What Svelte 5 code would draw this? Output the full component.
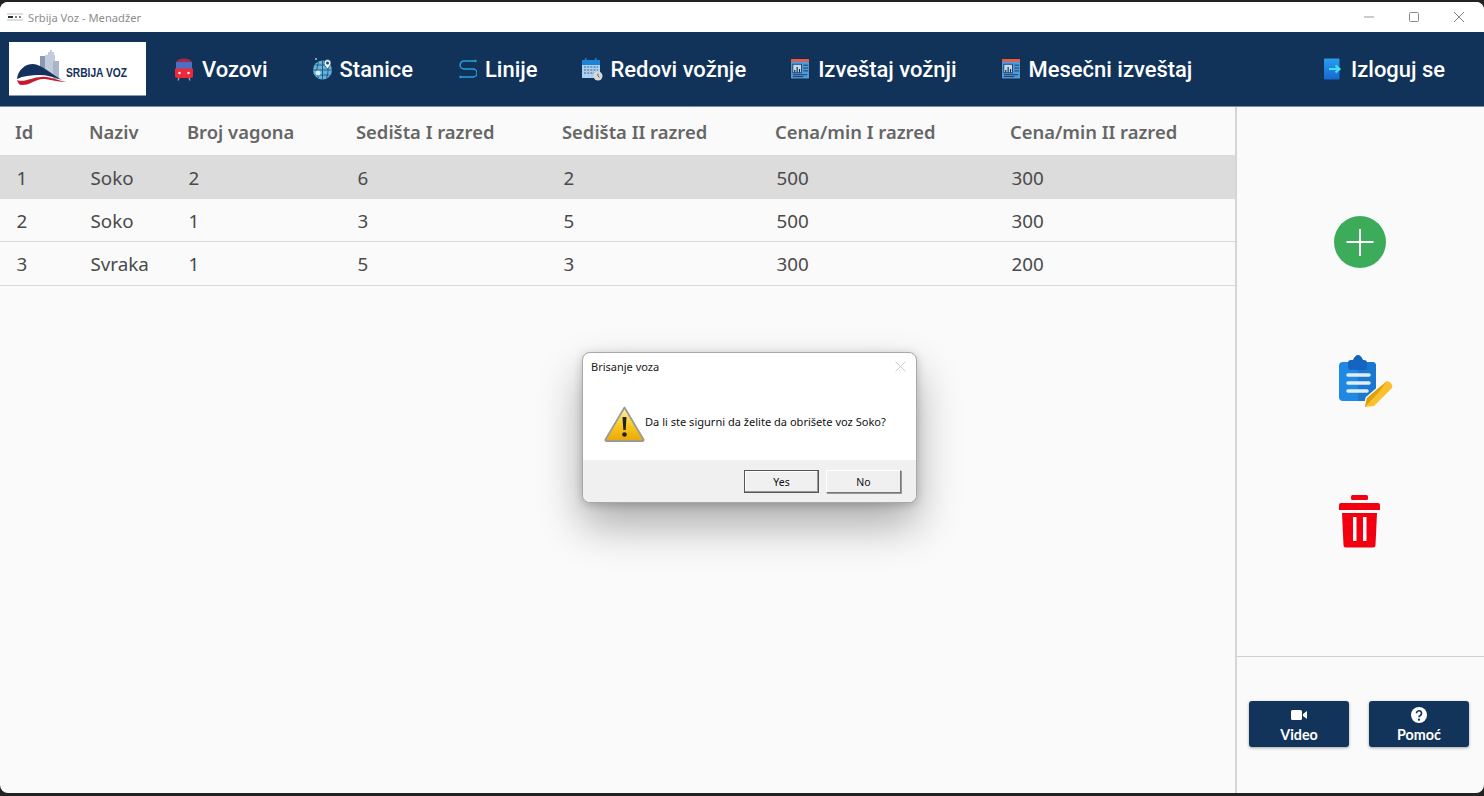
<script lang="ts">
  const columns = ["Id", "Naziv", "Broj vagona", "Sedišta I razred", "Sedišta II razred", "Cena/min I razred", "Cena/min II razred"];
  const trains = [
    [1, "Soko", 2, 6, 2, 500, 300],
    [2, "Soko", 1, 3, 5, 500, 300],
    [3, "Svraka", 1, 5, 3, 300, 200],
  ];
</script>

{#snippet train()}
  <svg width="20" height="24" viewBox="0 0 20 24">
    <path d="M2 7c0-4 4-5.500 8-5.500S18 3 18 7v2H2z" fill="#a62a45" />
    <rect x="2" y="5" width="16" height="7" fill="#4a6fc4" />
    <path d="M1 11.500h18V19a2 2 0 0 1-2 2H3a2 2 0 0 1-2-2z" fill="#ee2a3a" />
    <circle cx="5.500" cy="16" r="1.200" fill="#fff" />
    <circle cx="14.500" cy="16" r="1.200" fill="#fff" />
    <path d="M5 21l-1 2.500M15 21l1 2.500" stroke="#aab" stroke-width="1.200" />
  </svg>
{/snippet}

{#snippet globe()}
  <svg width="20" height="24" viewBox="-1 0 20 24">
    <circle cx="9.500" cy="13" r="9.500" fill="#63b4dc" />
    <path d="M0 13h19M9.500 3.500v19M2.500 8h14M2.500 18h14M5.500 5c-2 5-2 11 0 16M13.500 5c2 5 2 11 0 16" stroke="#17496f" stroke-width=".8" fill="none" />
    <circle cx="5" cy="16" r="2.500" fill="#d8ecf6" />
    <path d="M14.500 12c-2.500-3-3.500-4.500-3.500-6a3.500 3.500 0 0 1 7 0c0 1.500-1 3-3.500 6z" fill="#eef6fa" stroke="#17496f" stroke-width=".7" />
    <circle cx="14.500" cy="6" r="1.500" fill="#17496f" />
    <circle cx="3" cy="2" r="1" fill="#9cc" />
  </svg>
{/snippet}

{#snippet line()}
  <svg width="20" height="24" viewBox="-1.500 0 20 24" fill="none">
    <path d="M17 4H5.500a4 4 0 0 0 0 8h9a4 4 0 0 1 0 8H2" stroke="#2a9fdc" stroke-width="1.400" />
    <circle cx="17" cy="4" r="1.200" fill="#2a9fdc" />
    <circle cx="2" cy="20" r="1.200" fill="#2a9fdc" />
  </svg>
{/snippet}

{#snippet calendar()}
  <svg width="21" height="24" viewBox="0 0 21 24">
    <rect x="0" y="3" width="18" height="18" fill="#a9d2f2" />
    <rect x="0" y="3" width="18" height="5" fill="#1d83d8" />
    <rect x="3" y="1" width="1.500" height="4" fill="#1d83d8" />
    <rect x="13" y="1" width="1.500" height="4" fill="#1d83d8" />
    <path d="M2 10h14M2 13h14M2 16h10" stroke="#6f7fa8" stroke-width="1.400" stroke-dasharray="2 1.200" />
    <circle cx="16" cy="19" r="4.500" fill="#d8d8d8" />
    <path d="M16 16.500V19l1.500 1.500" stroke="#555" stroke-width=".9" fill="none" />
  </svg>
{/snippet}

{#snippet report()}
  <svg width="20" height="24" viewBox="0 0 21 24">
    <rect x=".5" y="1" width="20" height="21.500" fill="#4d9ade" stroke="#1d2840" />
    <rect x="1" y="1.500" width="19" height="3" fill="#e0604c" />
    <rect x="3" y="7" width="9" height="9" fill="#bcdcf4" stroke="#1d2840" stroke-width=".8" />
    <path d="M5 16v-3M7.500 16v-6M10 16v-4" stroke="#1d2840" stroke-width="1.200" />
    <path d="M14 8h5M14 11h5M14 14h5M3 18h15M3 20h11" stroke="#16304f" stroke-width=".9" />
  </svg>
{/snippet}

{#snippet logout()}
  <svg width="20" height="24" viewBox="0 0 20 24">
    <defs>
      <linearGradient id="door" x1="0" y1="0" x2="0" y2="1">
        <stop offset="0" stop-color="#2a9cf0" />
        <stop offset="1" stop-color="#1668d0" />
      </linearGradient>
    </defs>
    <rect x="1" y="1.500" width="15.500" height="21" rx="1" fill="url(#door)" />
    <path d="M6 12h10M12.500 8.500l4 3.500-4 3.500" stroke="#3fe0f0" stroke-width="2.200" fill="none" />
  </svg>
{/snippet}

<div class="screen">
  <div class="window">
    <header class="titlebar">
      <div class="title">
        <svg class="app-icon" width="16" height="8" viewBox="0 0 16 8">
          <path d="M0 1h16M0 7h16" stroke="#bbb" stroke-width="1" />
          <path d="M1 4h5" stroke="#233" stroke-width="2" />
          <path d="M8 4h2M12 4h2" stroke="#555" stroke-width="1.500" />
        </svg>
        <span>Srbija Voz - Menadžer</span>
      </div>
      <div class="window-controls">
        <svg width="12" height="12" viewBox="0 0 12 12"><path d="M1 6h10" stroke="#999" /></svg>
        <svg width="12" height="12" viewBox="0 0 12 12"><rect x="1.500" y="1.500" width="9" height="9" rx="1" fill="none" stroke="#888" /></svg>
        <svg width="12" height="12" viewBox="0 0 12 12"><path d="M1 1l10 10M11 1L1 11" stroke="#888" /></svg>
      </div>
    </header>

    <nav class="navbar">
      <div class="logo">
        <svg width="137" height="54" viewBox="0 0 137 54">
          <rect x="31" y="14" width="6" height="18" fill="#8a99b5" />
          <path d="M36 33V13h3V10h2V8h2v2h2v3h1v20z" fill="#c2cbdb" />
          <rect x="44" y="19" width="6" height="18" fill="#a9b5ca" />
          <path d="M8 37C9 28 16 22 24 22c8 0 18 10 29 16-8-3-15-5-23-5-8 0-16 1-22 4z" fill="#13315c" />
          <path d="M8 38c1 3 2 5 5 5 9 0 14-7 23-6 8 1 14 3 22 3-10-1-16-6-26-5-8 0-17 6-24 3z" fill="#c8192e" />
          <text x="57" y="35" class="logo-text" textLength="61" lengthAdjust="spacingAndGlyphs">SRBIJA VOZ</text>
        </svg>
      </div>
      <a class="nav-item">{@render train()}<span>Vozovi</span></a>
      <a class="nav-item">{@render globe()}<span>Stanice</span></a>
      <a class="nav-item">{@render line()}<span>Linije</span></a>
      <a class="nav-item">{@render calendar()}<span>Redovi vožnje</span></a>
      <a class="nav-item">{@render report()}<span>Izveštaj vožnji</span></a>
      <a class="nav-item">{@render report()}<span>Mesečni izveštaj</span></a>
      <a class="nav-item logout">{@render logout()}<span>Izloguj se</span></a>
    </nav>

    <div class="content">
      <main class="table">
        <div class="row head">
          {#each columns as col}
            <div>{col}</div>
          {/each}
        </div>
        {#each trains as t, i}
          <div class="row body" class:selected={i === 0} class:plain={i === 0}>
            {#each t as cell}
              <div>{cell}</div>
            {/each}
          </div>
        {/each}
      </main>

      <aside class="sidebar">
        <div class="actions">
          <button class="action" aria-label="Dodaj">
            <svg width="52" height="52" viewBox="0 0 52 52">
              <circle cx="26" cy="26" r="26" fill="#3cab5a" />
              <path d="M26 13v27M12.500 26h27" stroke="#fff" stroke-width="2" />
            </svg>
          </button>
          <button class="action" aria-label="Izmeni">
            <svg width="54" height="54" viewBox="0 0 54 54">
              <path d="M4 7h29a4 4 0 0 1 4 4v31a4 4 0 0 1-4 4H4a4 4 0 0 1-4-4V11a4 4 0 0 1 4-4z" fill="#1e88e5" />
              <path d="M19 7h14a4 4 0 0 1 4 4v31a4 4 0 0 1-4 4H19z" fill="#1b78d0" />
              <path d="M9 8a3 3 0 0 1 3-3h2c1-3 3-5 5-5s4 2 5 5h1a3 3 0 0 1 3 3v4a3 3 0 0 1-3 3H12a3 3 0 0 1-3-3z" fill="#1565c0" />
              <path d="M9 20h21M9 28h21M9 36h19" stroke="#e3edf8" stroke-width="3.500" stroke-linecap="round" />
              <path d="M48 26 28 43l-2 9 9-1 18-18c1-3-1-6-5-7z" fill="#fbc02d" stroke="#fafafa" stroke-width="3" paint-order="stroke" />
              <path d="M48 26 28 43l-2 9 13-14z" fill="#dc9f0e" />
            </svg>
          </button>
          <button class="action" aria-label="Obriši">
            <svg width="42" height="53" viewBox="0 0 42 53">
              <rect x="12" y="0" width="17" height="5" rx="1.500" fill="#f2000f" />
              <path d="M0 10a2 2 0 0 1 2-2h37a2 2 0 0 1 2 2v5H0z" fill="#f2000f" />
              <path d="M3 18h35l-1.500 32a2.500 2.500 0 0 1-2.500 2.500H7A2.500 2.500 0 0 1 4.500 50z" fill="#f2000f" />
              <rect x="14" y="22" width="3.500" height="24" fill="#fafafa" />
              <rect x="24" y="22" width="3.500" height="24" fill="#fafafa" />
            </svg>
          </button>
        </div>
        <div class="help">
          <button class="help-btn">
            <svg width="16" height="16" viewBox="0 0 16 16">
              <rect x="0" y="3" width="11" height="10" rx="1.500" fill="#fff" />
              <path d="M12 7l4-3v8l-4-3z" fill="#fff" />
            </svg>
            <span>Video</span>
          </button>
          <button class="help-btn">
            <svg width="16" height="16" viewBox="0 0 16 16">
              <circle cx="8" cy="8" r="8" fill="#fff" />
              <path d="M5.500 6.300a2.500 2.500 0 1 1 3.800 2.100c-.9.500-1.300 1-1.300 1.900" fill="none" stroke="#12335a" stroke-width="1.700" />
              <circle cx="8" cy="12.700" r="1.100" fill="#12335a" />
            </svg>
            <span>Pomoć</span>
          </button>
        </div>
      </aside>
    </div>

    <div class="dialog">
      <div class="dialog-body">
        <div class="dialog-title">
          <span>Brisanje voza</span>
          <svg width="11" height="11" viewBox="0 0 11 11"><path d="M.5.500l10 10M10.500.500l-10 10" stroke="#ccc" /></svg>
        </div>
        <div class="dialog-msg">
          <svg width="41" height="36" viewBox="0 0 41 36">
            <defs>
              <linearGradient id="warn" x1="0" y1="0" x2="0" y2="1">
                <stop offset="0" stop-color="#fff3b0" />
                <stop offset=".55" stop-color="#f7c81e" />
                <stop offset="1" stop-color="#eba708" />
              </linearGradient>
            </defs>
            <path d="M20.500 1.500 39.500 33.500a1 1 0 0 1-1 1.500H2.500a1 1 0 0 1-1-1.500z" fill="url(#warn)" stroke="#9a9a9a" stroke-width="1.800" stroke-linejoin="round" />
            <path d="M18.500 11h4l-.8 13h-2.400z" fill="#222" />
            <circle cx="20.500" cy="28.500" r="2.300" fill="#222" />
          </svg>
          <span>Da li ste sigurni da želite da obrišete voz Soko?</span>
        </div>
      </div>
      <div class="dialog-footer">
        <button class="win-btn default">Yes</button>
        <button class="win-btn">No</button>
      </div>
    </div>
  </div>
</div>

<style>
  :global(body) {
    margin: 0;
    background: #222;
    overflow: hidden;
  }

  .screen {
    height: 796px;
    padding: 2px 0 3px;
    box-sizing: border-box;
    background: #222;
  }

  .window {
    position: relative;
    height: 100%;
    display: flex;
    flex-direction: column;
    background: #fafafa;
    border-radius: 8px;
    overflow: hidden;
  }

  .titlebar {
    flex: 0 0 30px;
    display: flex;
    justify-content: space-between;
    align-items: center;
    background: #fff;
  }

  .title {
    display: flex;
    align-items: center;
    gap: 5px;
    padding-left: 7px;
    font: 11.200px "Noto Sans", sans-serif;
    color: #8d8d8d;
  }

  .window-controls {
    display: flex;
    gap: 33px;
    padding-right: 19px;
  }

  .navbar {
    flex: 0 0 75px;
    display: flex;
    align-items: center;
    gap: 44px;
    padding: 0 39px 0 9px;
    background: #11335a;
    border-bottom: 1px solid #7d8ea3;
    box-sizing: border-box;
  }

  .logo {
    width: 137px;
    height: 54px;
    margin-right: -16px;
    background: #fff;
    border-bottom: 1px solid #8a99b5;
    box-sizing: border-box;
  }

  .logo svg {
    display: block;
  }

  .logo-text {
    font: bold 12.500px "Liberation Sans", sans-serif;
    fill: #13315c;
  }

  .nav-item {
    display: flex;
    align-items: center;
    gap: 8px;
    color: #fff;
    font: 500 21.950px Roboto, sans-serif;
  }

  .nav-item svg {
    display: block;
  }

  .logout {
    margin-left: auto;
  }

  .content {
    flex: 1;
    display: flex;
    min-height: 0;
  }

  .table {
    flex: 1;
    font-family: "Noto Sans", sans-serif;
  }

  .row {
    display: grid;
    grid-template-columns: 74px 98px 169px 206px 213px 235px 1fr;
    padding-left: 15px;
    align-items: center;
    box-sizing: border-box;
  }

  .head {
    height: 48px;
    font-size: 18.400px;
    font-weight: 600;
    color: #666;
  }

  .body {
    height: 43.500px;
    padding-top: 2px;
    font-size: 18.800px;
    color: #4a4a4a;
    border-bottom: 1px solid #d8d8d8;
  }

  .body > div {
    padding-left: 1.500px;
  }

  .plain {
    border-bottom: none;
  }

  .selected {
    background: #dcdcdc;
  }

  .sidebar {
    flex: 0 0 249px;
    display: flex;
    flex-direction: column;
    border-left: 2px solid #d5d5d5;
    box-sizing: border-box;
  }

  .actions {
    flex: 1;
    display: flex;
    flex-direction: column;
    justify-content: center;
    align-items: center;
    gap: 80px;
    padding-right: 1px;
  }

  .action {
    height: 60px;
    padding: 0;
    display: flex;
    align-items: center;
    background: none;
    border: none;
  }

  .action:nth-child(2) {
    margin-left: 11px;
  }

  .help {
    flex: 0 0 137px;
    display: flex;
    gap: 20px;
    padding: 44px 0 0 12px;
    border-top: 1px solid #cfcfcf;
    box-sizing: border-box;
  }

  .help-btn {
    width: 100px;
    height: 46px;
    display: flex;
    flex-direction: column;
    align-items: center;
    justify-content: center;
    gap: 3px;
    padding: 2px 0 0;
    border: none;
    border-radius: 3px;
    background: #12335a;
    color: #fff;
    font: bold 14.300px Lato, sans-serif;
    box-shadow: 0 1px 3px rgba(0, 0, 0, 0.35);
  }

  .help-btn svg {
    display: block;
  }

  .dialog {
    position: absolute;
    left: 582px;
    top: 350px;
    width: 335px;
    height: 151px;
    display: flex;
    flex-direction: column;
    background: #fff;
    border-radius: 8px;
    border: 1px solid #a8a8a8;
    box-sizing: border-box;
    overflow: hidden;
    box-shadow: 0 22px 44px rgba(0, 0, 0, 0.32), 0 2px 10px rgba(0, 0, 0, 0.2);
    font-family: "Noto Sans", sans-serif;
  }

  .dialog-body {
    flex: 1;
  }

  .dialog-title {
    display: flex;
    justify-content: space-between;
    align-items: center;
    padding: 6px 10px 0 8px;
    font-size: 11px;
    color: #1a1a1a;
  }

  .dialog-msg {
    display: flex;
    align-items: center;
    gap: 0;
    padding: 32px 0 0 21px;
    font-size: 11.050px;
    color: #111;
  }

  .dialog-msg span {
    margin-top: -6px;
  }

  .dialog-footer {
    flex: 0 0 42px;
    display: flex;
    justify-content: flex-end;
    align-items: flex-start;
    gap: 7px;
    padding: 10px 15px 0 0;
    background: #f0f0f0;
    box-sizing: border-box;
  }

  .win-btn {
    width: 75px;
    height: 23px;
    padding: 0;
    background: #f0f0f0;
    border: 1px solid;
    border-color: #fff #777 #777 #fff;
    box-shadow: 1px 1px 0 #999;
    font: 10.500px "Noto Sans", sans-serif;
    color: #111;
  }

  .default {
    border: 1px solid #555;
    box-shadow: inset -1px -1px 0 #999, inset 1px 1px 0 #fff;
  }
</style>
